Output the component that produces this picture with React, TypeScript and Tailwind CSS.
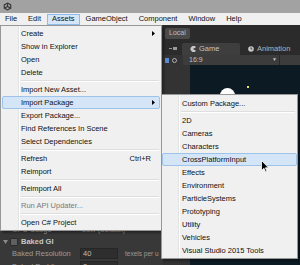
import React from "react";

type RowProps = {
  label: string;
  shortcut?: string;
  arrow?: boolean;
  hl?: boolean;
  disabled?: boolean;
  sub?: boolean;
};

function Arrow() {
  return (
    <svg width="3" height="5" viewBox="0 0 3 5" className="shrink-0">
      <path d="M0 0 L3 2.5 L0 5 Z" fill="#000" />
    </svg>
  );
}

function Row({ label, shortcut, arrow, hl, disabled, sub }: RowProps) {
  return (
    <div
      className={`relative flex items-center h-[13px] pr-[4px] border rounded-[2px] ${
        sub ? "pl-[19px] mx-0" : "pl-[18px] mx-[1px]"
      } ${hl ? "bg-[#d4e5f7] border-[#9ec3ea]" : "border-transparent"} ${
        disabled ? "text-[#7a7a7a]" : "text-[#111]"
      }`}
    >
      <span className="flex-1 whitespace-nowrap leading-none">{label}</span>
      {shortcut && <span className="mr-[4px] whitespace-nowrap leading-none">{shortcut}</span>}
      {arrow && <Arrow />}
    </div>
  );
}

function Sep({ sub }: { sub?: boolean }) {
  return (
    <div className={`h-[4px] flex flex-col justify-center mr-[2px] ${sub ? "ml-[19px]" : "ml-[20px]"}`}>
      <div className="h-px bg-[#dedede]" />
      <div className="h-px bg-white" />
    </div>
  );
}

function UnityLogo() {
  return (
    <svg width="9" height="9" viewBox="0 0 10 10">
      <g fill="none" stroke="#3a3a3a" strokeWidth="1.3">
        <path d="M5 1.2 L8.6 3.2 L8.6 6.8 L5 8.8 L1.4 6.8 L1.4 3.2 Z" />
        <path d="M5 5 L5 1.2 M5 5 L8.6 6.8 M5 5 L1.4 6.8" />
      </g>
    </svg>
  );
}

function Cursor() {
  return (
    <svg width="8" height="13" viewBox="0 0 8 13">
      <path
        d="M0.5 0.5 L0.5 10.5 L3 8.3 L4.6 12 L6 11.4 L4.4 7.8 L7.5 7.8 Z"
        fill="#000"
        stroke="#fff"
        strokeWidth="0.8"
        strokeLinejoin="round"
      />
    </svg>
  );
}

export default function App() {
  return (
    <div className="relative w-[300px] h-[265px] overflow-hidden font-['Liberation_Sans',Arial,sans-serif] text-[7.5px] bg-[#383838]">
      {/* Title bar */}
      <div className="h-[13px] bg-[#a2a2a2] flex items-center pl-[3px]">
        <UnityLogo />
      </div>
      {/* Menu bar */}
      <div className="h-[12px] bg-[#f0f0f0] flex items-center gap-[1px] text-[#111]">
        {["File", "Edit", "Assets", "GameObject", "Component", "Window", "Help"].map((m) => (
          <div
            key={m}
            className={`h-[11px] px-[4px] flex items-center border leading-none ${
              m === "Assets" ? "bg-[#d5e6f8] border-[#8fbbe8]" : "border-transparent"
            }`}
          >
            {m}
          </div>
        ))}
      </div>

      {/* Editor body */}
      <div className="flex h-[240px]">
        {/* Inspector (left) */}
        <div className="w-[163px] shrink-0 bg-[#383838] flex flex-col overflow-hidden">
          <div className="h-[199px] shrink-0" />
          <div className="h-[12px] shrink-0 flex items-center pl-[12px] text-[#9c9c9c]">
            <span className="w-[70px]">CPU Usage</span>
            <span>Low (default)</span>
          </div>
          <div className="h-[11px] shrink-0 flex items-center pl-[3px] gap-[2px] text-[#c8c8c8] font-bold">
            <svg width="5" height="4" viewBox="0 0 5 4">
              <path d="M0 0 L5 0 L2.5 4 Z" fill="#8a8a8a" />
            </svg>
            <div className="w-[8px] h-[8px] rounded-[1px] bg-[#606060] border border-[#2a2a2a]" />
            <span className="ml-[1px]">Baked GI</span>
          </div>
          <div className="h-[13px] shrink-0 flex items-center pl-[12px] text-[#9c9c9c]">
            <span className="w-[68px]">Baked Resolution</span>
            <div className="w-[38px] h-[11px] bg-[#2e2e2e] border border-[#262626] flex items-center pl-[2px] text-[#bdbdbd]">
              40
            </div>
            <span className="ml-[7px] text-[6.5px] whitespace-nowrap">texels per u</span>
          </div>
          <div className="h-[13px] shrink-0 flex items-center pl-[12px] text-[#9c9c9c]">
            <span className="w-[68px]">Baked Padding</span>
            <div className="w-[38px] h-[11px] bg-[#2e2e2e] border border-[#262626] flex items-center pl-[2px] text-[#bdbdbd]">
              2
            </div>
          </div>
        </div>

        {/* Right side: scene / game */}
        <div className="flex-1 flex flex-col bg-[#2b2b2b]">
          <div className="h-[17px] shrink-0 flex items-center pl-[2px]">
            <div className="h-[11px] px-[4px] rounded-[2px] bg-[#4a4a4a] text-[#bdbdbd] flex items-center text-[7px]">
              Local
            </div>
          </div>
          <div className="h-[13px] shrink-0 flex items-end">
            <div className="w-[19px] h-full flex items-center justify-center gap-[1px]">
              <div className="w-[3px] h-px bg-[#9a9a9a]" />
              <div className="w-[4px] h-[3px] bg-[#9a9a9a]" />
            </div>
            <div className="w-[58px] h-[12px] bg-[#3e3e3e] rounded-t-[2px] flex items-center pl-[8px] gap-[3px] text-[#c4c4c4] text-[7.5px]">
              <svg width="6" height="6" viewBox="0 0 6 6">
                <path d="M3 3 L6 1.2 A3 3 0 1 0 6 4.8 Z" fill="#c8c8c8" />
              </svg>
              Game
            </div>
            <div className="h-[12px] flex items-center pl-[8px] gap-[3px] text-[#b4b4b4]">
              <svg width="6" height="6" viewBox="0 0 6 6">
                <circle cx="3" cy="3" r="2.8" fill="#c8c8c8" />
                <path d="M3 1.3 L3 3 L4.3 3" stroke="#2b2b2b" strokeWidth="0.8" fill="none" />
              </svg>
              Animation
            </div>
          </div>
          <div className="flex-1 flex">
            <div className="w-[20px] shrink-0 bg-[#333] flex flex-col">
              <div className="h-[10px] flex items-center pl-[2px] gap-[3px]">
                <div className="w-[4px] h-[5px] bg-[#5b8ad0]" />
                <div className="w-[5px] h-[5px] rounded-full border border-[#b0b0b0]" />
              </div>
            </div>
            <div className="flex-1 flex flex-col">
              <div className="h-[10px] shrink-0 bg-[#3c3c3c] flex items-center pl-[6px] text-[#c0c0c0] text-[7px]">
                <span className="flex-1">16:9</span>
                <span className="text-[5px] mr-[2px]">▼</span>
                <div className="w-px h-full bg-[#2a2a2a] mr-[20px]" />
              </div>
              <div className="flex-1 flex">
                <div className="w-[7px] bg-[#333]" />
                <div className="flex-1 bg-[#0c1a24] flex flex-col items-start pl-[30px] pt-[21px]">
                  <div className="flex items-start gap-[8px]">
                    <div className="w-[15px] h-[15px] rounded-full bg-white mt-[2px]" />
                    <div className="w-[2px] h-[2px] bg-[#f0e060] ml-[4px]" />
                  </div>
                </div>
              </div>
            </div>
          </div>
        </div>
      </div>

      {/* Assets dropdown menu */}
      <div className="absolute left-0 top-[25px] w-[162px] bg-[#f0f0f0] border border-[#979797] pt-[1px] pb-[1px] shadow-[2px_2px_2px_rgba(0,0,0,0.35)]">
        <div className="absolute left-[17px] top-0 bottom-0 w-[2px] flex">
          <div className="w-px bg-[#e2e3e3]" />
          <div className="w-px bg-white" />
        </div>
        <div className="relative">
          <Row label="Create" arrow />
          <Row label="Show in Explorer" />
          <Row label="Open" />
          <Row label="Delete" />
          <Sep />
          <Row label="Import New Asset..." />
          <Row label="Import Package" arrow hl />
          <Row label="Export Package..." />
          <Row label="Find References In Scene" />
          <Row label="Select Dependencies" />
          <Sep />
          <Row label="Refresh" shortcut="Ctrl+R" />
          <Row label="Reimport" />
          <Sep />
          <Row label="Reimport All" />
          <Sep />
          <Row label="Run API Updater..." disabled />
          <Sep />
          <Row label="Open C# Project" />
        </div>
      </div>

      {/* Import Package submenu */}
      <div className="absolute left-[161px] top-[94px] w-[137px] bg-[#f0f0f0] border border-[#979797] pt-[2px] pb-[1px] shadow-[2px_2px_2px_rgba(0,0,0,0.35)]">
        <div className="absolute left-[16px] top-0 bottom-0 w-[2px] flex">
          <div className="w-px bg-[#e2e3e3]" />
          <div className="w-px bg-white" />
        </div>
        <div className="relative">
          <Row sub label="Custom Package..." />
          <Sep sub />
          <Row sub label="2D" />
          <Row sub label="Cameras" />
          <Row sub label="Characters" />
          <Row sub label="CrossPlatformInput" hl />
          <Row sub label="Effects" />
          <Row sub label="Environment" />
          <Row sub label="ParticleSystems" />
          <Row sub label="Prototyping" />
          <Row sub label="Utility" />
          <Row sub label="Vehicles" />
          <Row sub label="Visual Studio 2015 Tools" />
        </div>
      </div>

      {/* Mouse cursor */}
      <div className="absolute left-[261px] top-[160px]">
        <Cursor />
      </div>
    </div>
  );
}
